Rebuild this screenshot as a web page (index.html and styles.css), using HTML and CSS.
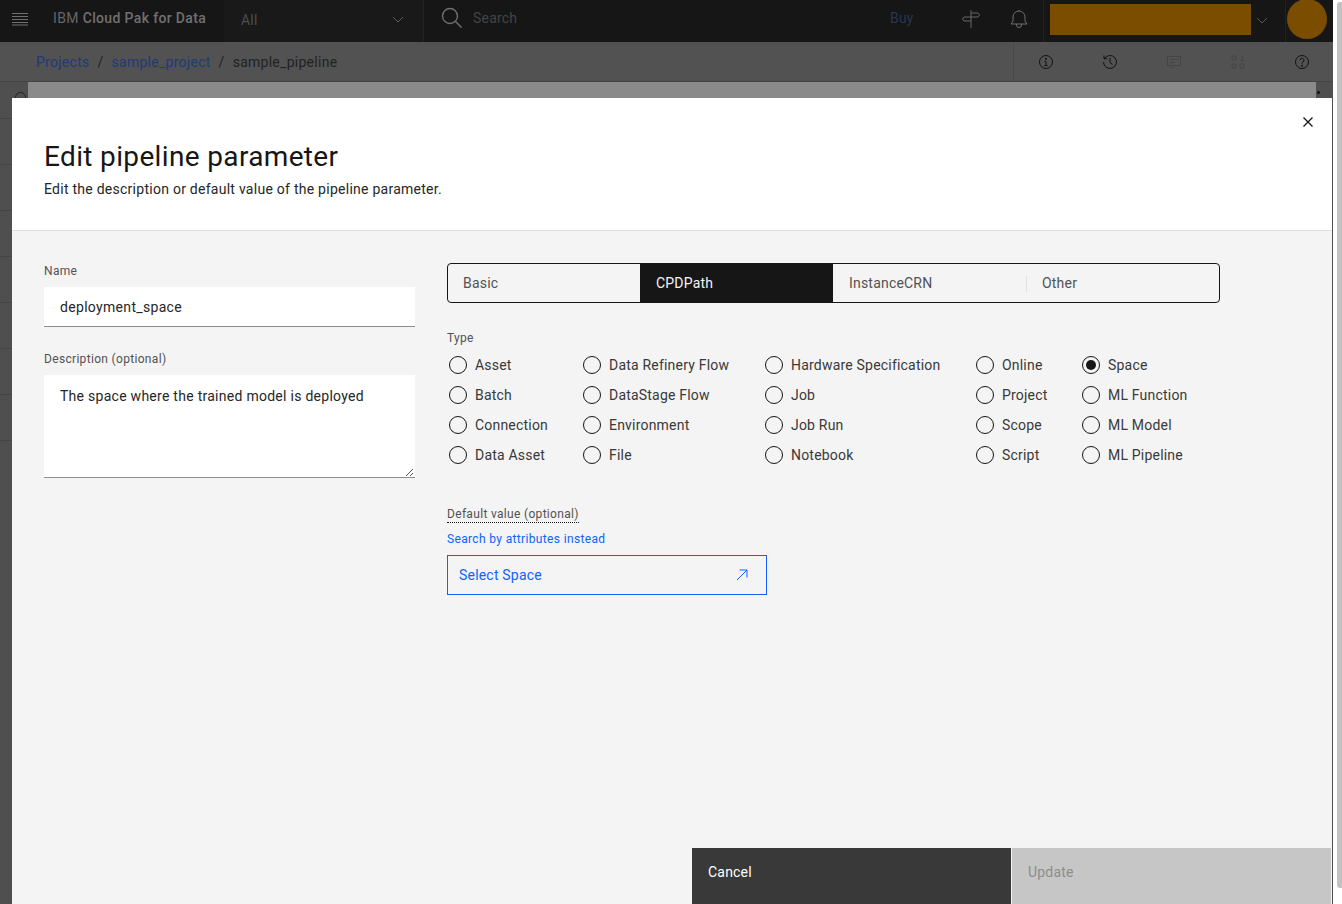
FILE: index.html
```html
<!DOCTYPE html>
<html lang="en">
<head>
	<meta charset="UTF-8">
	<title>Edit pipeline parameter</title>
	<link rel="stylesheet" href="styles.css">
</head>
<body>
	<div id="page">
		<div id="app">
			<header class="topbar">
				<div class="menu-btn">
					<svg width="18" height="14" viewBox="0 0 18 14" fill="none" stroke="#6f6f6f"><path d="M1 1.500h16M1 4.500h16M1 7.500h16M1 10.500h16M1 13h16"/></svg>
				</div>
				<div class="brand">IBM <b>Cloud Pak for Data</b></div>
				<div class="scope">
					<span>All</span>
					<svg width="12" height="8" viewBox="0 0 12 8" fill="none" stroke="#5a5a5a"><path d="M1 1l5 5 5-5"/></svg>
				</div>
				<div class="search">
					<svg width="22" height="22" viewBox="0 0 22 22" fill="none" stroke="#6f6f6f" stroke-width="1.400"><circle cx="9" cy="9" r="7.500"/><path d="M14.500 14.500l6 6"/></svg>
					<span>Search</span>
				</div>
				<div class="buy">Buy</div>
				<div class="top-icon">
					<svg width="20" height="20" viewBox="0 0 20 20" fill="none" stroke="#666"><path d="M10 1v18M10 4h7l1.500 2-1.500 2H3L1.500 10 3 12h7"/></svg>
				</div>
				<div class="top-icon">
					<svg width="20" height="20" viewBox="0 0 20 20" fill="none" stroke="#6f6f6f"><path d="M2 15l2-3V8a6 6 0 0 1 12 0v4l2 3zM10 2V1M7.500 15v1a2.500 2.500 0 0 0 5 0v-1"/></svg>
				</div>
				<div class="account">
					<div class="account-box"></div>
					<svg width="12" height="8" viewBox="0 0 12 8" fill="none" stroke="#5a5a5a"><path d="M1 1l5 5 5-5"/></svg>
				</div>
				<div class="avatar-cell"><div class="avatar"></div></div>
			</header>

			<div class="subbar">
				<nav class="crumbs">
					<a>Projects</a><span>/</span><a>sample_project</a><span>/</span><em>sample_pipeline</em>
				</nav>
				<div class="tools">
					<div class="tool">
						<svg width="16" height="16" viewBox="0 0 16 16" fill="none" stroke="#111"><circle cx="8" cy="8" r="6.500"/><path d="M6.500 7.500H8V11.500M6.500 11.500h3"/><circle cx="8" cy="5" r=".6" fill="#111"/></svg>
					</div>
					<div class="tool">
						<svg width="16" height="16" viewBox="0 0 16 16" fill="none" stroke="#111"><path d="M2.500 4.500A6.500 6.500 0 1 1 1.500 8M2 1.500v3.200h3.200M8 4v4.500l2.500 2"/></svg>
					</div>
					<div class="tool">
						<svg width="16" height="16" viewBox="0 0 16 16" fill="none" stroke="#444"><path d="M1.500 2.500h13v9H8.500L6 14.500v-3H1.500zM4 5.500h8M4 8.500h5"/></svg>
					</div>
					<div class="tool">
						<svg width="16" height="16" viewBox="0 0 16 16" fill="none" stroke="#444"><circle cx="4" cy="4" r="2.200"/><path d="M11 2h1.500v4.500M10.500 6.500h3.500"/><circle cx="4" cy="12" r="2.200"/><circle cx="12" cy="12" r="2.200"/></svg>
					</div>
					<div class="tool">
						<svg width="16" height="16" viewBox="0 0 16 16" fill="none" stroke="#111"><circle cx="8" cy="8" r="6.500"/><path d="M6 6.300a2 2 0 1 1 3 1.700c-.7.400-1 .8-1 1.700"/><circle cx="8" cy="11.700" r=".6" fill="#111"/></svg>
					</div>
				</div>
			</div>

			<div class="backdrop-sheet"></div>
			<div class="backdrop-circle"></div>
			<div class="backdrop-rows"><i></i><i></i><i></i><i></i><i></i><i></i><i></i><i></i></div>
			<div class="side-dot"></div>

			<div class="modal">
				<div class="modal-head">
					<svg class="close" width="16" height="16" viewBox="0 0 16 16" fill="none" stroke="#161616" stroke-width="1.300"><path d="M3.500 3.500l9 9M12.500 3.500l-9 9"/></svg>
					<h1>Edit pipeline parameter</h1>
					<p>Edit the description or default value of the pipeline parameter.</p>
				</div>
				<div class="modal-body">
					<div class="left-col">
						<label class="field-label">Name</label>
						<div class="text-input">deployment_space</div>
						<label class="field-label desc-label">Description (optional)</label>
						<div class="text-area">
							The space where the trained model is deployed
							<svg class="grip" width="9" height="9" viewBox="0 0 9 9" fill="none" stroke="#555"><path d="M1 8l7-7M5 8l3-3"/></svg>
						</div>
					</div>
					<div class="right-col">
						<div class="switcher">
							<div class="sw-item sw-first">Basic</div>
							<div class="sw-item sw-active">CPDPath</div>
							<div class="sw-item">InstanceCRN</div>
							<div class="sw-item sw-last">Other</div>
						</div>
						<label class="field-label type-label">Type</label>
						<div class="radio-grid">
							<div class="radio-col col-1">
								<div class="radio"><i></i>Asset</div>
								<div class="radio"><i></i>Batch</div>
								<div class="radio"><i></i>Connection</div>
								<div class="radio"><i></i>Data Asset</div>
							</div>
							<div class="radio-col col-2">
								<div class="radio"><i></i>Data Refinery Flow</div>
								<div class="radio"><i></i>DataStage Flow</div>
								<div class="radio"><i></i>Environment</div>
								<div class="radio"><i></i>File</div>
							</div>
							<div class="radio-col col-3">
								<div class="radio"><i></i>Hardware Specification</div>
								<div class="radio"><i></i>Job</div>
								<div class="radio"><i></i>Job Run</div>
								<div class="radio"><i></i>Notebook</div>
							</div>
							<div class="radio-col col-4">
								<div class="radio"><i></i>Online</div>
								<div class="radio"><i></i>Project</div>
								<div class="radio"><i></i>Scope</div>
								<div class="radio"><i></i>Script</div>
							</div>
							<div class="radio-col">
								<div class="radio"><i class="checked"></i>Space</div>
								<div class="radio"><i></i>ML Function</div>
								<div class="radio"><i></i>ML Model</div>
								<div class="radio"><i></i>ML Pipeline</div>
							</div>
						</div>
						<div class="default-label"><span>Default value (optional)</span></div>
						<a class="attr-link">Search by attributes instead</a>
						<div class="select-btn">
							<span>Select Space</span>
							<svg width="16" height="16" viewBox="0 0 16 16" fill="none" stroke="#0f62fe"><path d="M3 13L13 3M5.500 3H13v7.500"/></svg>
						</div>
					</div>
				</div>
				<div class="modal-foot">
					<div class="btn-cancel">Cancel</div>
					<div class="btn-update">Update</div>
				</div>
			</div>
		</div>
		<div class="scroll-thumb"></div>
	</div>
</body>
</html>
```

FILE: styles.css
```css
html, body {
	margin: 0;
	height: 100%;
	overflow: hidden;
}
body {
	font-family: "Roboto", "Inter", sans-serif;
	font-size: 14px;
	letter-spacing: .2px;
	color: #161616;
	background-color: #fff;
}
#page {
	position: relative;
	width: 1342px;
	height: 904px;
	overflow: hidden;
	background-color: #fff;
}
#app {
	position: relative;
	width: 1333px;
	height: 904px;
	overflow: hidden;
	background-color: #4f4f4f;
}

/* top bar */
.topbar {
	display: flex;
	height: 42px;
	background-color: #161616;
	color: #5e5e5e;
}
.menu-btn {
	width: 40px;
	box-sizing: border-box;
	padding-bottom: 5px;
	display: flex;
	align-items: center;
	justify-content: center;
}
.brand {
	width: 184px;
	padding-left: 13px;
	line-height: 37px;
	letter-spacing: .35px;
	box-sizing: border-box;
	color: #666;
}
.brand b {
	font-weight: 500;
	color: #707070;
}
.scope {
	width: 200px;
	box-sizing: border-box;
	padding: 0 19px 3px 17px;
	background-color: #191919;
	border-right: 1px solid #222;
	display: flex;
	align-items: center;
	justify-content: space-between;
	color: #4d4d4d;
}
.search {
	flex: 1;
	display: flex;
	align-items: center;
	gap: 10px;
	padding-left: 17px;
	padding-bottom: 6px;
	color: #444;
}
.buy {
	width: 57px;
	line-height: 37px;
	color: #263650;
}
.top-icon {
	width: 48px;
	display: flex;
	align-items: center;
	justify-content: center;
	padding-bottom: 4px;
	box-sizing: border-box;
}
.account {
	width: 243px;
	box-sizing: border-box;
	padding-left: 6px;
	border-left: 1px solid #222;
	border-right: 1px solid #222;
	display: flex;
	align-items: center;
	gap: 5px;
}
.account-box {
	width: 201px;
	height: 31px;
	margin-top: -3px;
	background-color: #7a4d00;
}
.avatar-cell {
	width: 47px;
	flex-shrink: 0;
}
.avatar {
	margin: -1px 0 0 1px;
	width: 40px;
	height: 40px;
	border-radius: 50%;
	background-color: #7a4d00;
}

/* breadcrumb bar */
.subbar {
	display: flex;
	justify-content: space-between;
	height: 39px;
	background-color: #525252;
	border-bottom: 1px solid #444;
}
.crumbs {
	padding-left: 36px;
	line-height: 40px;
	letter-spacing: .27px;
	color: #222;
}
.crumbs a {
	color: #1e3a78;
}
.crumbs span {
	margin: 0 8px;
}
.crumbs em {
	font-style: normal;
}
.tools {
	display: flex;
	flex-shrink: 0;
	width: 321px;
	margin-right: -1px;
	border-left: 1px solid #484848;
	box-sizing: border-box;
}
.tool {
	width: 64px;
	display: flex;
	align-items: center;
	justify-content: center;
}

/* what shows behind the dialog */
.backdrop-sheet {
	position: absolute;
	left: 28px;
	top: 82px;
	width: 1288px;
	height: 16px;
	background-color: #8a8a8a;
}
.backdrop-circle {
	position: absolute;
	left: 15px;
	top: 92px;
	width: 11px;
	height: 11px;
	box-sizing: border-box;
	border: 1px solid #222;
	border-radius: 50%;
}
.backdrop-rows {
	position: absolute;
	left: 0;
	top: 118px;
	width: 12px;
}
.backdrop-rows i {
	display: block;
	height: 45px;
	border-top: 1px solid #444;
}
.side-dot {
	position: absolute;
	left: 1317px;
	top: 91px;
	width: 3px;
	height: 3px;
	border-radius: 50%;
	background-color: #111;
}
.scroll-thumb {
	position: absolute;
	left: 1337px;
	top: 2px;
	width: 5px;
	height: 886px;
	background-color: #c2c2c2;
	border-radius: 3px 0 0 3px;
}

/* dialog */
.modal {
	position: absolute;
	left: 12px;
	top: 98px;
	width: 1320px;
	height: 806px;
	background-color: #f4f4f4;
	display: flex;
	flex-direction: column;
}
.modal-head {
	position: relative;
	height: 133px;
	box-sizing: border-box;
	padding: 42px 32px 0;
	background-color: #fff;
	border-bottom: 1px solid #e0e0e0;
}
.close {
	position: absolute;
	right: 16px;
	top: 16px;
}
.modal-head h1 {
	margin: 0;
	font-size: 28px;
	font-weight: 400;
	line-height: 34px;
	letter-spacing: .35px;
}
.modal-head p {
	margin: 6px 0 0;
	line-height: 18px;
	letter-spacing: .26px;
	color: #262626;
}
.modal-body {
	flex: 1;
	display: flex;
	padding-top: 32px;
}
.left-col {
	width: 371px;
	margin-left: 32px;
}
.field-label {
	display: block;
	font-size: 12px;
	line-height: 16px;
	letter-spacing: .32px;
	color: #525252;
}
.text-input {
	margin-top: 8px;
	height: 39px;
	line-height: 40px;
	padding-left: 16px;
	letter-spacing: .32px;
	color: #262626;
	background-color: #fff;
	border-bottom: 1px solid #8d8d8d;
}
.desc-label {
	margin-top: 24px;
}
.text-area {
	position: relative;
	margin-top: 8px;
	height: 91px;
	padding: 11px 16px 0;
	line-height: 20px;
	letter-spacing: .27px;
	color: #262626;
	background-color: #fff;
	border-bottom: 1px solid #8d8d8d;
}
.grip {
	position: absolute;
	right: 1px;
	bottom: 0;
}
.right-col {
	margin-left: 32px;
	width: 773px;
}
.switcher {
	display: flex;
	height: 40px;
	box-sizing: border-box;
	border: 1px solid #161616;
	border-radius: 4px;
	overflow: hidden;
}
.sw-item {
	width: 193px;
	box-sizing: border-box;
	padding-left: 16px;
	line-height: 38px;
	color: #525252;
}
.sw-first {
	width: 192px;
	padding-left: 15px;
}
.sw-active {
	background-color: #161616;
	color: #f4f4f4;
}
.sw-last {
	position: relative;
}
.sw-last::before {
	content: "";
	position: absolute;
	left: 0;
	top: 12px;
	height: 16px;
	border-left: 1px solid #e0e0e0;
}
.type-label {
	margin-top: 27px;
}
.radio-grid {
	display: flex;
	margin-top: 4px;
	padding-left: 2px;
}
.radio-col {
	display: flex;
	flex-direction: column;
}
.col-1 { width: 134px; }
.col-2 { width: 182px; }
.col-3 { width: 211px; }
.col-4 { width: 106px; }
.radio {
	display: flex;
	align-items: center;
	height: 30px;
	gap: 8px;
	color: #393939;
	white-space: nowrap;
}
.radio i {
	width: 18px;
	height: 18px;
	box-sizing: border-box;
	border: 1px solid #161616;
	border-radius: 50%;
	display: flex;
	align-items: center;
	justify-content: center;
}
.radio i.checked::after {
	content: "";
	width: 10px;
	height: 10px;
	border-radius: 50%;
	background-color: #161616;
}
.default-label {
	margin-top: 36px;
	font-size: 12px;
	line-height: 16px;
	letter-spacing: .32px;
	color: #525252;
}
.default-label span {
	border-bottom: 1px dotted #161616;
	display: inline-block;
}
.attr-link {
	display: block;
	margin-top: 8px;
	font-size: 12px;
	line-height: 16px;
	letter-spacing: .35px;
	color: #0f62fe;
}
.select-btn {
	margin-top: 8px;
	width: 320px;
	height: 40px;
	box-sizing: border-box;
	padding: 0 16px 0 11px;
	border: 1px solid #0f62fe;
	display: flex;
	align-items: center;
	justify-content: space-between;
	color: #0f62fe;
}
.modal-foot {
	display: flex;
	justify-content: flex-end;
	height: 56px;
	padding-right: 1px;
}
.btn-cancel, .btn-update {
	width: 319px;
	box-sizing: border-box;
	padding-left: 16px;
	line-height: 48px;
}
.btn-cancel {
	background-color: #393939;
	color: #fff;
	margin-right: 1px;
}
.btn-update {
	background-color: #c6c6c6;
	color: #8d8d8d;
}
```
